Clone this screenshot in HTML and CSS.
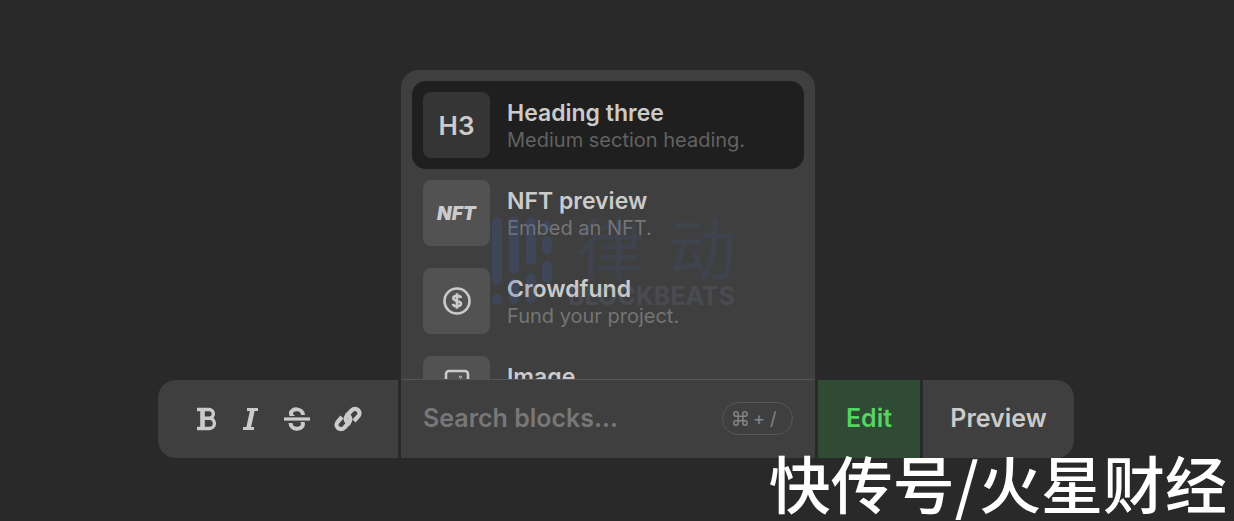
FILE: index.html
```
<!DOCTYPE html>
<html lang="en">
<head>
  <meta charset="UTF-8">
  <meta name="viewport" content="width=device-width, initial-scale=1">
  <title>Block editor</title>
  <link rel="stylesheet" href="styles.css">
</head>
<body>

<main class="editor">
  <div class="toolbar">

    <div class="format">
      <button type="button" aria-label="Bold">
        <svg width="20" height="26" viewBox="0 0 20 26" fill="none" stroke="currentColor">
          <path d="M0 3.500H12A4.200 4.200 0 0 1 12 12.200H6M12 12.200A5 5 0 0 1 12.500 22.500H0" stroke-width="3.400" />
          <path d="M5.500 3V23" stroke-width="4.600" />
        </svg>
      </button>
      <button type="button" aria-label="Italic">
        <svg width="15" height="26" viewBox="0 0 15 26" fill="none" stroke="currentColor">
          <path d="M4 3.500H15M0 22.500H11" stroke-width="3.200" />
          <path d="M9.700 3L5.300 23" stroke-width="4.600" />
        </svg>
      </button>
      <button type="button" aria-label="Strikethrough">
        <svg width="26" height="26" viewBox="0 0 26 26" fill="none" stroke="currentColor">
          <path d="M19 9C19 2 7 1.500 7 7.500C7 10 9 11.500 13 12.500C18 13.500 19 15.500 19 18C19 24.500 6.500 24.500 6.500 17" stroke-width="4" />
          <path class="strike-gap" d="M3 13H23" stroke-width="6" />
          <path d="M0 13H26" stroke-width="3.200" />
        </svg>
      </button>
      <button type="button" aria-label="Link">
        <svg width="28" height="28" viewBox="0 0 28 28" fill="none" stroke="currentColor" stroke-width="4.200">
          <path d="M16.500 18.500C11.500 17.500 10.500 13.500 13 10.500L17.500 5.500C22 1 28.500 7 24 11.500L20 16" />
          <path d="M11.500 9.500C16.500 10.500 17.500 14.500 15 17.500L10.500 22.500C6 27 -.500 21 4 16.500L8 12" />
        </svg>
      </button>
    </div>

    <div class="blocks">
      <div class="menu">
        <button type="button" class="item selected">
          <span class="thumb">H3</span>
          <span class="text">
            <span class="name">Heading three</span>
            <span class="desc">Medium section heading.</span>
          </span>
        </button>
        <button type="button" class="item">
          <span class="thumb nft">NFT</span>
          <span class="text">
            <span class="name">NFT preview</span>
            <span class="desc">Embed an NFT.</span>
          </span>
        </button>
        <button type="button" class="item">
          <span class="thumb">
            <svg width="28" height="28" viewBox="0 0 28 28" fill="none" stroke="currentColor" stroke-width="2.600">
              <circle cx="14" cy="14" r="12.500" />
              <path d="M18 11C17.500 8.300 10.300 8 10.300 11.300C10.300 14.800 18 13 18 16.700C18 20.200 10.300 20 10 16.800M14 6.300V21.700" />
            </svg>
          </span>
          <span class="text">
            <span class="name">Crowdfund</span>
            <span class="desc">Fund your project.</span>
          </span>
        </button>
        <button type="button" class="item">
          <span class="thumb">
            <svg width="26" height="40" viewBox="0 0 26 40" fill="none" stroke="currentColor" stroke-width="2.600">
              <rect x="2" y="2" width="22" height="36" rx="3" />
              <circle cx="16.500" cy="8" r="1" stroke-width="1" />
              <path d="M2 30L9 20L16 29L19 25L24 31" />
            </svg>
          </span>
          <span class="text">
            <span class="name">Image</span>
            <span class="desc">Upload an image.</span>
          </span>
        </button>
      </div>

      <div class="search">
        <input type="text" placeholder="Search blocks..." aria-label="Search blocks">
        <kbd>
          <svg width="15" height="15" viewBox="0 0 16 16" fill="none" stroke="currentColor" stroke-width="1.600">
            <path d="M5.500 5.500H10.500V10.500H5.500ZM5.500 5.500V3.200A2.300 2.300 0 1 0 3.200 5.500ZM10.500 5.500H12.800A2.300 2.300 0 1 0 10.500 3.200ZM10.500 10.500V12.800A2.300 2.300 0 1 0 12.800 10.500ZM5.500 10.500H3.200A2.300 2.300 0 1 0 5.500 12.800Z" />
          </svg>
          <span>+</span>
          <span>/</span>
        </kbd>
      </div>
    </div>

    <button type="button" class="mode active">Edit</button>
    <button type="button" class="mode preview">Preview</button>
  </div>
</main>

<!-- Watermarks sit over the editor -->
<div class="brand">
  <svg width="60" height="90" viewBox="0 0 60 90" fill="none" stroke="currentColor" stroke-width="10" stroke-linecap="round">
    <path d="M5 6V63M5 83V84M22 6V53M22 67V83M39 6V44M39 62V82M55 10V12M55 25V34M55 50V62" />
  </svg>
  <div class="brand-text">
    <div class="brand-cn"><span>律</span><span>动</span></div>
    <div class="brand-en">BLOCKBEATS</div>
  </div>
</div>

<div class="source">快传号/火星财经</div>

</body>
</html>
```
FILE: styles.css
```
* {
  box-sizing: border-box;
}
body {
  margin: 0;
  min-height: 100vh;
  background: #292929;
  color: #cbcbcb;
  font-family: Inter, "Noto Sans CJK SC", sans-serif;
  position: relative;
  overflow: hidden;
}
button {
  border: none;
  padding: 0;
  background: none;
  color: inherit;
  font-family: inherit;
  cursor: pointer;
}
svg {
  display: block;
}
.editor {
  min-height: 100vh;
  display: flex;
  flex-direction: column;
  justify-content: flex-end;
  padding: 0 160px 63px 158px;
}
.toolbar {
  display: flex;
  align-items: flex-end;
  gap: 3px;
}

/* Text formatting */
.format {
  width: 240px;
  height: 78px;
  display: flex;
  align-items: center;
  gap: 26px;
  padding-left: 39px;
  background: #3f3f3f;
  border-radius: 18px 0 0 18px;
}
.format button:last-child {
  margin-left: -2px;
}
.strike-gap {
  stroke: #3f3f3f;
}

/* Block menu */
.blocks {
  flex: 1;
  min-width: 0;
  background: #3f3f3f;
  border-radius: 18px 18px 0 0;
}
.menu {
  height: 309px;
  padding: 11px;
  overflow: hidden;
}
.item {
  width: 100%;
  display: flex;
  align-items: center;
  gap: 17px;
  padding: 11px;
  border-radius: 14px;
  text-align: left;
}
.item.selected {
  background: #1f1f1f;
}
.thumb {
  width: 67px;
  height: 66px;
  display: flex;
  align-items: center;
  justify-content: center;
  background: #525252;
  border-radius: 8px;
  font-size: 26px;
  font-weight: 600;
}
.selected .thumb {
  background: #353535;
}
.thumb.nft {
  font-size: 19px;
  font-weight: 900;
  font-style: italic;
}
.text {
  padding-top: 3px;
}
.name, .desc {
  display: block;
  line-height: 27px;
}
.name {
  font-size: 23px;
  font-weight: 600;
}
.desc {
  font-size: 20px;
  color: #757575;
}
.selected .desc {
  color: #626262;
}

/* Search */
.search {
  height: 79px;
  display: flex;
  align-items: center;
  gap: 12px;
  padding: 0 22px 2px;
  border-top: 1px solid #565656;
}
.search input {
  flex: 1;
  min-width: 0;
  border: none;
  outline: none;
  padding: 0;
  background: none;
  color: #cbcbcb;
  font-family: inherit;
  font-size: 25px;
  font-weight: 600;
}
.search input::placeholder {
  color: #777777;
}
kbd {
  width: 71px;
  height: 33px;
  display: flex;
  align-items: center;
  gap: 5px;
  padding-left: 10px;
  border: 1px solid #575757;
  border-radius: 17px;
  color: #858585;
  font-family: inherit;
  font-size: 18px;
}

/* Edit / Preview */
.mode {
  height: 78px;
  width: 102px;
  padding-bottom: 2px;
  background: #3f3f3f;
  font-size: 25px;
  font-weight: 600;
}
.mode.active {
  background: #2f4b33;
  color: #55d364;
}
.mode.preview {
  width: 151px;
  border-radius: 0 18px 18px 0;
}

/* Watermarks */
.brand {
  position: absolute;
  left: 492px;
  top: 216px;
  display: flex;
  gap: 16px;
  color: #3f5fae;
  opacity: 0.22;
  pointer-events: none;
}
.brand-cn {
  display: flex;
  gap: 24px;
  padding-left: 8px;
  font-size: 68px;
  line-height: 68px;
  opacity: 0.6;
}
.brand-en {
  color: #8090b0;
  font-size: 25px;
  line-height: 24px;
  font-weight: 700;
  opacity: 0.7;
}
.source {
  position: absolute;
  right: 7px;
  bottom: 4px;
  color: #ffffff;
  font-family: "Noto Sans CJK SC", sans-serif;
  font-size: 62px;
  line-height: 70px;
  font-weight: 500;
}
```
